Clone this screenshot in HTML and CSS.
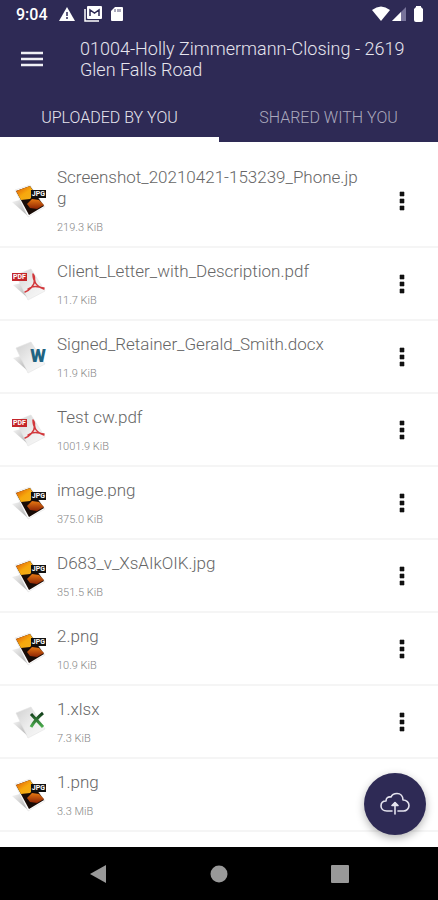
FILE: index.html
```html
<!DOCTYPE html>
<html lang="en">
<head>
  <meta charset="UTF-8">
  <meta name="viewport" content="width=device-width, initial-scale=1.0">
  <title>Documents</title>
  <link rel="stylesheet" href="styles.css">
</head>
<body>

<!-- shared icons -->
<svg class="sprite" aria-hidden="true">
  <defs>
    <linearGradient id="paper" x1="0" y1="0" x2="1" y2="1">
      <stop offset="0" stop-color="#d0d0d0"/>
      <stop offset="0.5" stop-color="#ececec"/>
      <stop offset="1" stop-color="#fafafa"/>
    </linearGradient>
    <linearGradient id="fold" x1="0" y1="0" x2="1" y2="1">
      <stop offset="0" stop-color="#f4f4f4"/>
      <stop offset="1" stop-color="#a8a8a8"/>
    </linearGradient>
    <linearGradient id="sun" x1="0" y1="0" x2="1" y2="1">
      <stop offset="0" stop-color="#d94f08"/>
      <stop offset="0.5" stop-color="#f7a80c"/>
      <stop offset="1" stop-color="#f0b020"/>
    </linearGradient>
    <linearGradient id="ember" x1="0" y1="0" x2="0" y2="1">
      <stop offset="0" stop-color="#e87912"/>
      <stop offset="1" stop-color="#8c2304"/>
    </linearGradient>
    <linearGradient id="leaf" x1="0" y1="0" x2="0" y2="1">
      <stop offset="0" stop-color="#123c1a"/>
      <stop offset="1" stop-color="#4db04f"/>
    </linearGradient>
  </defs>
  <symbol id="page" viewBox="0 0 34 34">
    <path d="M1 18L9 16L17 32Z" fill="url(#fold)"/>
    <path d="M4 8L19 2L33 24L16 33Z" fill="url(#paper)" stroke="#e2e2e2" stroke-width="0.6"/>
  </symbol>
  <symbol id="jpg" viewBox="0 0 34 34">
    <path d="M0 18L8 16L17 33Z" fill="url(#fold)"/>
    <path d="M3 6L18 1L33 23L16 33Z" fill="#fff" stroke="#ddd" stroke-width="0.5"/>
    <path d="M4 7L18 2L32 22L17 31Z" fill="#180b06"/>
    <path d="M4 7L18 2L23 10L18 15L9 16Z" fill="url(#sun)"/>
    <path d="M15 20L20 15L27 16L32 21L25 25L18 24Z" fill="url(#ember)"/>
  </symbol>
  <symbol id="pdf" viewBox="0 0 34 34">
    <use href="#page" width="34" height="34"/>
    <path d="M21 7C21 14 25 21 32 21M23 14C21 20 18 23 13 25M16 22C20 19 26 19 32 22M21 7C23 9 23 12 22 16" fill="none" stroke="#d2383c" stroke-width="1.5" stroke-linecap="round"/>
  </symbol>
  <symbol id="excel" viewBox="0 0 34 34">
    <use href="#page" width="34" height="34"/>
    <path d="M19 9L31 22M31 8C26 12 22 17 19 22" fill="none" stroke="url(#leaf)" stroke-width="3"/>
  </symbol>
  <symbol id="dots" viewBox="0 0 6 20">
    <path d="M1 1h4v4H1zM1 8h4v4H1zM1 15h4v4H1z" fill="#111" stroke="#111" stroke-width="0.6" stroke-linejoin="round"/>
  </symbol>
</svg>

<header class="header">
  <div class="status">
    <span class="time">9:04</span>
    <svg width="16" height="14" viewBox="0 0 16 14"><path d="M8 0L16 14H0Z" fill="#fff"/><path d="M8 5v4M8 10v2" stroke="#2e2a55" stroke-width="1.5"/></svg>
    <svg width="18" height="16" viewBox="0 0 18 16"><path d="M1 3V15H15" fill="none" stroke="#fff" stroke-width="1.5"/><rect x="3" y="0" width="15" height="13" rx="1" fill="#fff"/><path d="M6 10V4L10.500 7L15 4V10" fill="none" stroke="#2e2a55" stroke-width="1.5"/></svg>
    <svg width="12" height="16" viewBox="0 0 12 16"><path d="M4 1H11Q12 1 12 2V14Q12 15 11 15H1Q0 15 0 14V5Z" fill="#fff"/><path d="M4 3v3M7 3v3M9 3v3" stroke="#2e2a55" stroke-width="0.8"/></svg>
    <div class="signals">
      <svg width="18" height="16" viewBox="0 0 18 16"><path d="M0 4Q9-3 18 4L9 15Z" fill="#fff"/></svg>
      <svg width="14" height="16" viewBox="0 0 14 16"><path d="M14 1V15H0Z" fill="#77739a"/><path d="M9 6V15H0Z" fill="#fff"/></svg>
      <svg class="battery" width="9" height="16" viewBox="0 0 9 16"><path d="M2 0H7V1L9 3V14Q9 16 7 16H2Q0 16 0 14V3L2 1Z" fill="#fff"/></svg>
    </div>
  </div>
  <div class="toolbar">
    <button class="menu" type="button" aria-label="Menu">
      <svg width="22" height="16" viewBox="0 0 22 16"><path d="M0 2H22M0 8H22M0 14H22" stroke="#f0f0f5" stroke-width="2.500"/></svg>
    </button>
    <h1>01004-Holly Zimmermann-Closing - 2619 Glen Falls Road</h1>
  </div>
  <div class="tabs" role="tablist">
    <button class="tab active" type="button" role="tab" aria-selected="true">UPLOADED BY YOU</button>
    <button class="tab" type="button" role="tab" aria-selected="false">SHARED WITH YOU</button>
  </div>
</header>

<main>
  <ul class="files">
    <li class="file">
      <div class="icon"><svg width="34" height="34"><use href="#jpg"/></svg><span class="tag jpg">JPG</span></div>
      <div class="info"><div class="name">Screenshot_20210421-153239_Phone.jpg</div><div class="size">219.3 KiB</div></div>
      <button class="more" type="button" aria-label="More"><svg width="6" height="20"><use href="#dots"/></svg></button>
    </li>
    <li class="file">
      <div class="icon"><svg width="34" height="34"><use href="#pdf"/></svg><span class="tag pdf">PDF</span></div>
      <div class="info"><div class="name">Client_Letter_with_Description.pdf</div><div class="size">11.7 KiB</div></div>
      <button class="more" type="button" aria-label="More"><svg width="6" height="20"><use href="#dots"/></svg></button>
    </li>
    <li class="file">
      <div class="icon"><svg width="34" height="34"><use href="#page"/></svg><span class="letter">W</span></div>
      <div class="info"><div class="name">Signed_Retainer_Gerald_Smith.docx</div><div class="size">11.9 KiB</div></div>
      <button class="more" type="button" aria-label="More"><svg width="6" height="20"><use href="#dots"/></svg></button>
    </li>
    <li class="file">
      <div class="icon"><svg width="34" height="34"><use href="#pdf"/></svg><span class="tag pdf">PDF</span></div>
      <div class="info"><div class="name">Test cw.pdf</div><div class="size">1001.9 KiB</div></div>
      <button class="more" type="button" aria-label="More"><svg width="6" height="20"><use href="#dots"/></svg></button>
    </li>
    <li class="file">
      <div class="icon"><svg width="34" height="34"><use href="#jpg"/></svg><span class="tag jpg">JPG</span></div>
      <div class="info"><div class="name">image.png</div><div class="size">375.0 KiB</div></div>
      <button class="more" type="button" aria-label="More"><svg width="6" height="20"><use href="#dots"/></svg></button>
    </li>
    <li class="file">
      <div class="icon"><svg width="34" height="34"><use href="#jpg"/></svg><span class="tag jpg">JPG</span></div>
      <div class="info"><div class="name">D683_v_XsAIkOIK.jpg</div><div class="size">351.5 KiB</div></div>
      <button class="more" type="button" aria-label="More"><svg width="6" height="20"><use href="#dots"/></svg></button>
    </li>
    <li class="file">
      <div class="icon"><svg width="34" height="34"><use href="#jpg"/></svg><span class="tag jpg">JPG</span></div>
      <div class="info"><div class="name">2.png</div><div class="size">10.9 KiB</div></div>
      <button class="more" type="button" aria-label="More"><svg width="6" height="20"><use href="#dots"/></svg></button>
    </li>
    <li class="file">
      <div class="icon"><svg width="34" height="34"><use href="#excel"/></svg></div>
      <div class="info"><div class="name">1.xlsx</div><div class="size">7.3 KiB</div></div>
      <button class="more" type="button" aria-label="More"><svg width="6" height="20"><use href="#dots"/></svg></button>
    </li>
    <li class="file">
      <div class="icon"><svg width="34" height="34"><use href="#jpg"/></svg><span class="tag jpg">JPG</span></div>
      <div class="info"><div class="name">1.png</div><div class="size">3.3 MiB</div></div>
    </li>
  </ul>
</main>

<button class="upload" type="button" aria-label="Upload">
  <svg width="30" height="24" viewBox="0 0 30 24" fill="none" stroke="#e4e3ee" stroke-width="1.600" stroke-linecap="round" stroke-linejoin="round">
    <path d="M12 19H7C3 19 1 16.500 1 14C1 11 3 9 6 9C6 6 8 4.500 11 5C12 2.500 14 1.500 17 1.500C20.500 1.500 23 4 23 8C26.500 8 29 10.500 29 13.500C29 16.500 26.500 19 23.500 19H18"/>
    <path d="M15 22V11"/><path d="M12 13.500L15 10.500L18 13.500Z" fill="#e4e3ee"/>
  </svg>
</button>

<nav class="navbar">
  <button type="button" aria-label="Back"><svg width="18" height="18" viewBox="0 0 18 18"><path d="M1 9L17 0V18Z" fill="#999"/></svg></button>
  <button type="button" aria-label="Home"><svg width="18" height="18" viewBox="0 0 18 18"><circle cx="9" cy="9" r="8.500" fill="#999"/></svg></button>
  <button type="button" aria-label="Recent apps"><svg width="18" height="18" viewBox="0 0 18 18"><rect width="18" height="18" rx="1" fill="#999"/></svg></button>
</nav>

</body>
</html>
```
FILE: styles.css
```css
* { box-sizing: border-box; }
body {
  margin: 0;
  min-height: 100vh;
  display: flex;
  flex-direction: column;
  font-family: Roboto, "Liberation Sans", sans-serif;
  font-weight: 300;
  background: #fff;
}
button {
  padding: 0;
  border: none;
  background: none;
  font: inherit;
  cursor: pointer;
}
svg { display: block; flex: none; }
.sprite { position: absolute; width: 0; height: 0; }

.header { background: #2e2a55; color: #e6e5ee; }
.status {
  display: flex;
  align-items: center;
  gap: 9px;
  height: 28px;
  padding: 0 15px 0 16px;
}
.time {
  color: #fff;
  font-size: 16px;
  font-weight: 500;
  margin-right: 2px;
}
.signals { display: flex; gap: 2px; margin-left: auto; }
.battery { margin-left: 6px; }

.toolbar {
  display: flex;
  align-items: center;
  height: 62px;
}
.menu {
  flex: none;
  width: 60px;
  height: 48px;
  padding-left: 21px;
  margin-right: 20px;
}
h1 {
  margin: 0;
  padding-right: 24px;
  font-size: 18px;
  font-weight: 300;
  line-height: 21px;
}
.tabs { display: flex; height: 52px; }
.tab {
  flex: 1;
  color: #aba9bd;
  font-size: 16px;
  padding-top: 7px;
  border-bottom: 5px solid transparent;
}
.tab.active { color: #e6e5ee; border-bottom-color: #fff; }

main { flex: 1; }
.files {
  list-style: none;
  margin: 0;
  padding: 12px 0 15px;
}
.file {
  display: flex;
  align-items: center;
  padding: 12px 0 11px 12px;
  border-bottom: 2px solid #f5f5f5;
}
.icon {
  position: relative;
  flex: none;
  margin-right: 11px;
}
.info { flex: 1; padding-right: 4px; }
.name {
  padding-top: 1px;
  color: #666;
  font-size: 17px;
  line-height: 21px;
  word-break: break-all;
}
.size {
  margin-top: 11px;
  color: #888;
  font-size: 11px;
  line-height: 15px;
}
.more {
  display: flex;
  justify-content: center;
  align-items: center;
  width: 72px;
  height: 40px;
}
/* file type label over the icon */
.tag {
  position: absolute;
  padding: 0 1px;
  color: #fff;
  font-size: 7px;
  font-weight: 700;
  line-height: 8px;
}
.tag.jpg { top: 6px; right: 0; background: #111; }
.tag.pdf { top: 6px; left: 0; background: #c4262b; }
.letter {
  position: absolute;
  top: 6px;
  right: 0;
  color: #1f6482;
  font-size: 18px;
  font-weight: 900;
  line-height: 20px;
}

.upload {
  position: fixed;
  right: 12px;
  bottom: 65px;
  display: flex;
  justify-content: center;
  align-items: center;
  width: 62px;
  height: 62px;
  border-radius: 50%;
  background: #2e2a55;
  box-shadow: 0 3px 8px rgba(0,0,0,0.3);
}
.navbar {
  display: flex;
  justify-content: center;
  height: 53px;
  background: #000;
}
.navbar button {
  display: flex;
  justify-content: center;
  align-items: center;
  width: 121px;
}
```
